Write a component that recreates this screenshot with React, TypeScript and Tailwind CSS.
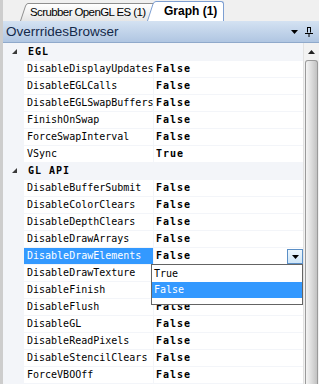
import React from 'react'

type Prop = { name: string; value: string }

const GROUPS: { title: string; props: Prop[] }[] = [
  {
    title: 'EGL',
    props: [
      { name: 'DisableDisplayUpdates', value: 'False' },
      { name: 'DisableEGLCalls', value: 'False' },
      { name: 'DisableEGLSwapBuffers', value: 'False' },
      { name: 'FinishOnSwap', value: 'False' },
      { name: 'ForceSwapInterval', value: 'False' },
      { name: 'VSync', value: 'True' },
    ],
  },
  {
    title: 'GL API',
    props: [
      { name: 'DisableBufferSubmit', value: 'False' },
      { name: 'DisableColorClears', value: 'False' },
      { name: 'DisableDepthClears', value: 'False' },
      { name: 'DisableDrawArrays', value: 'False' },
      { name: 'DisableDrawElements', value: 'False' },
      // these two values sit under the open dropdown list
      { name: 'DisableDrawTexture', value: '' },
      { name: 'DisableFinish', value: '' },
      { name: 'DisableFlush', value: 'False' },
      { name: 'DisableGL', value: 'False' },
      { name: 'DisableReadPixels', value: 'False' },
      { name: 'DisableStencilClears', value: 'False' },
      { name: 'ForceVBOOff', value: 'False' },
    ],
  },
]

const SELECTED = 'DisableDrawElements'

const mono = "font-['DejaVu_Sans_Mono',monospace] text-[10px]"

function CategoryRow({ title }: { title: string }) {
  return (
    <div className="flex h-[16px] items-center bg-[#f3f5f9]">
      <div className="w-[21px] pl-[9px] flex items-center">
        <svg width="6" height="6" viewBox="0 0 6 6">
          <path d="M5 0V5H0Z" fill="#3a3a3a" />
        </svg>
      </div>
      <span className={`${mono} pl-[4px] font-bold tracking-[1px] text-black leading-[16px]`}>{title}</span>
    </div>
  )
}

function PropRow({ prop }: { prop: Prop }) {
  const sel = prop.name === SELECTED
  return (
    <div className="flex h-[16px]">
      <div className="w-[21px] bg-[#f3f5f9]" />
      <div
        className={`${mono} w-[129px] mr-[1px] overflow-hidden whitespace-nowrap pl-[3px] leading-[16px] ${
          sel ? 'bg-[#3399ff] text-white' : 'bg-white text-black'
        }`}
      >
        {prop.name}
      </div>
      <div className="flex-1 flex bg-white pl-[2px]">
        {prop.value && (
          <span className={`${mono} font-bold tracking-[1px] leading-[16px] text-black`}>{prop.value}</span>
        )}
        {sel && (
          <div className="ml-auto mt-[1px] w-[16px] h-[15px] border border-[#5b8fc6] bg-gradient-to-b from-[#eef7fd] to-[#cfe6f8] flex items-center justify-center">
            <svg width="7" height="4" viewBox="0 0 7 4">
              <path d="M0 0H7L3.5 4Z" fill="#000" />
            </svg>
          </div>
        )}
      </div>
    </div>
  )
}

export default function App() {
  return (
    <div className="relative w-[319px] h-[384px] overflow-hidden bg-[#f0f0f0] border-l-[3px] border-[#cdcdcd] font-['Liberation_Sans',Arial,sans-serif]">
      {/* tab strip */}
      <div className="flex items-end h-[21px] pl-[17px]">
        <div className="flex h-[18px]">
          <svg width="8" height="18" viewBox="0 0 8 18" className="block">
            <defs>
              <linearGradient id="tabIn" x1="0" y1="0" x2="0" y2="1">
                <stop offset="0" stopColor="#ffffff" />
                <stop offset="1" stopColor="#e6e6e6" />
              </linearGradient>
            </defs>
            <path d="M0.5 18L5.5 3Q6.5 0.5 8 0.5V18Z" fill="url(#tabIn)" />
            <path d="M0.5 18L5.5 3Q6.5 0.5 8 0.5" fill="none" stroke="#8f8f8f" />
          </svg>
          <div className="w-[128px] h-[18px] border-t border-[#8f8f8f] bg-gradient-to-b from-white to-[#e6e6e6] pl-[2px] text-[11.5px] tracking-[-0.6px] leading-[17px] text-black whitespace-nowrap">
            Scrubber OpenGL ES (1)
          </div>
        </div>
        <div className="relative z-10 -ml-[9px] flex h-[20px]">
          <svg width="9" height="20" viewBox="0 0 9 20" className="block">
            <path d="M0.5 20L6 3Q7 0.5 9 0.5V20Z" fill="#ffffff" />
            <path d="M0.5 20L6 3Q7 0.5 9 0.5" fill="none" stroke="#7d9fd2" />
          </svg>
          <div className="h-[20px] border-t border-r border-[#7d9fd2] rounded-tr-[3px] bg-white pl-[8px] pr-[6px] text-[12px] font-bold leading-[19px] text-black whitespace-nowrap">
            Graph (1)
          </div>
        </div>
      </div>

      {/* title bar */}
      <div className="flex items-center h-[22px] pl-[3px] pr-[6px] border-b border-[#8fa9cb] bg-gradient-to-b from-[#d4e2f2] to-[#b0c6e2]">
        <span className="text-[13.5px] text-[#14294a] leading-none">OverrridesBrowser</span>
        <div className="ml-auto flex items-center gap-[7px]">
          <svg width="7" height="4" viewBox="0 0 7 4">
            <path d="M0 0H7L3.5 4Z" fill="#000" />
          </svg>
          <svg width="8" height="10" viewBox="0 0 8 10">
            <path d="M2 0.5H6" stroke="#000" />
            <path d="M2.5 0.5V5.5M5.5 0.5V5.5" stroke="#000" />
            <path d="M0 6.5H8" stroke="#000" />
            <path d="M4 7V10" stroke="#000" />
          </svg>
        </div>
      </div>

      {/* grid + scrollbar */}
      <div className="flex h-[341px]">
        <div className="flex-1 flex flex-col gap-[1px] pt-[1px] bg-[#f3f5f9]">
          {GROUPS.map(g => (
            <React.Fragment key={g.title}>
              <CategoryRow title={g.title} />
              {g.props.map(p => (
                <PropRow key={p.name} prop={p} />
              ))}
            </React.Fragment>
          ))}
        </div>
        <div className="w-[16px] flex flex-col bg-[#f2f2f2] border-l border-[#e2e2e2]">
          <div className="h-[17px] flex items-center justify-center">
            <svg width="7" height="4" viewBox="0 0 7 4">
              <path d="M3.5 0L7 4H0Z" fill="#222" />
            </svg>
          </div>
          <div className="flex-1 mx-[1px] rounded-t-[3px] border border-b-0 border-[#9a9a9a] bg-gradient-to-r from-[#f4f4f4] via-[#dcdcdc] to-[#c2c2c2]" />
        </div>
      </div>

      {/* dropdown list */}
      <div className="absolute left-[148px] top-[264px] w-[152px] h-[41px] border border-[#646464] bg-white pt-[1px]">
        <div className={`${mono} h-[16px] leading-[16px] pl-[2px] text-black`}>True</div>
        <div className={`${mono} h-[16px] leading-[16px] pl-[2px] bg-[#3399ff] text-white`}>False</div>
      </div>
    </div>
  )
}
